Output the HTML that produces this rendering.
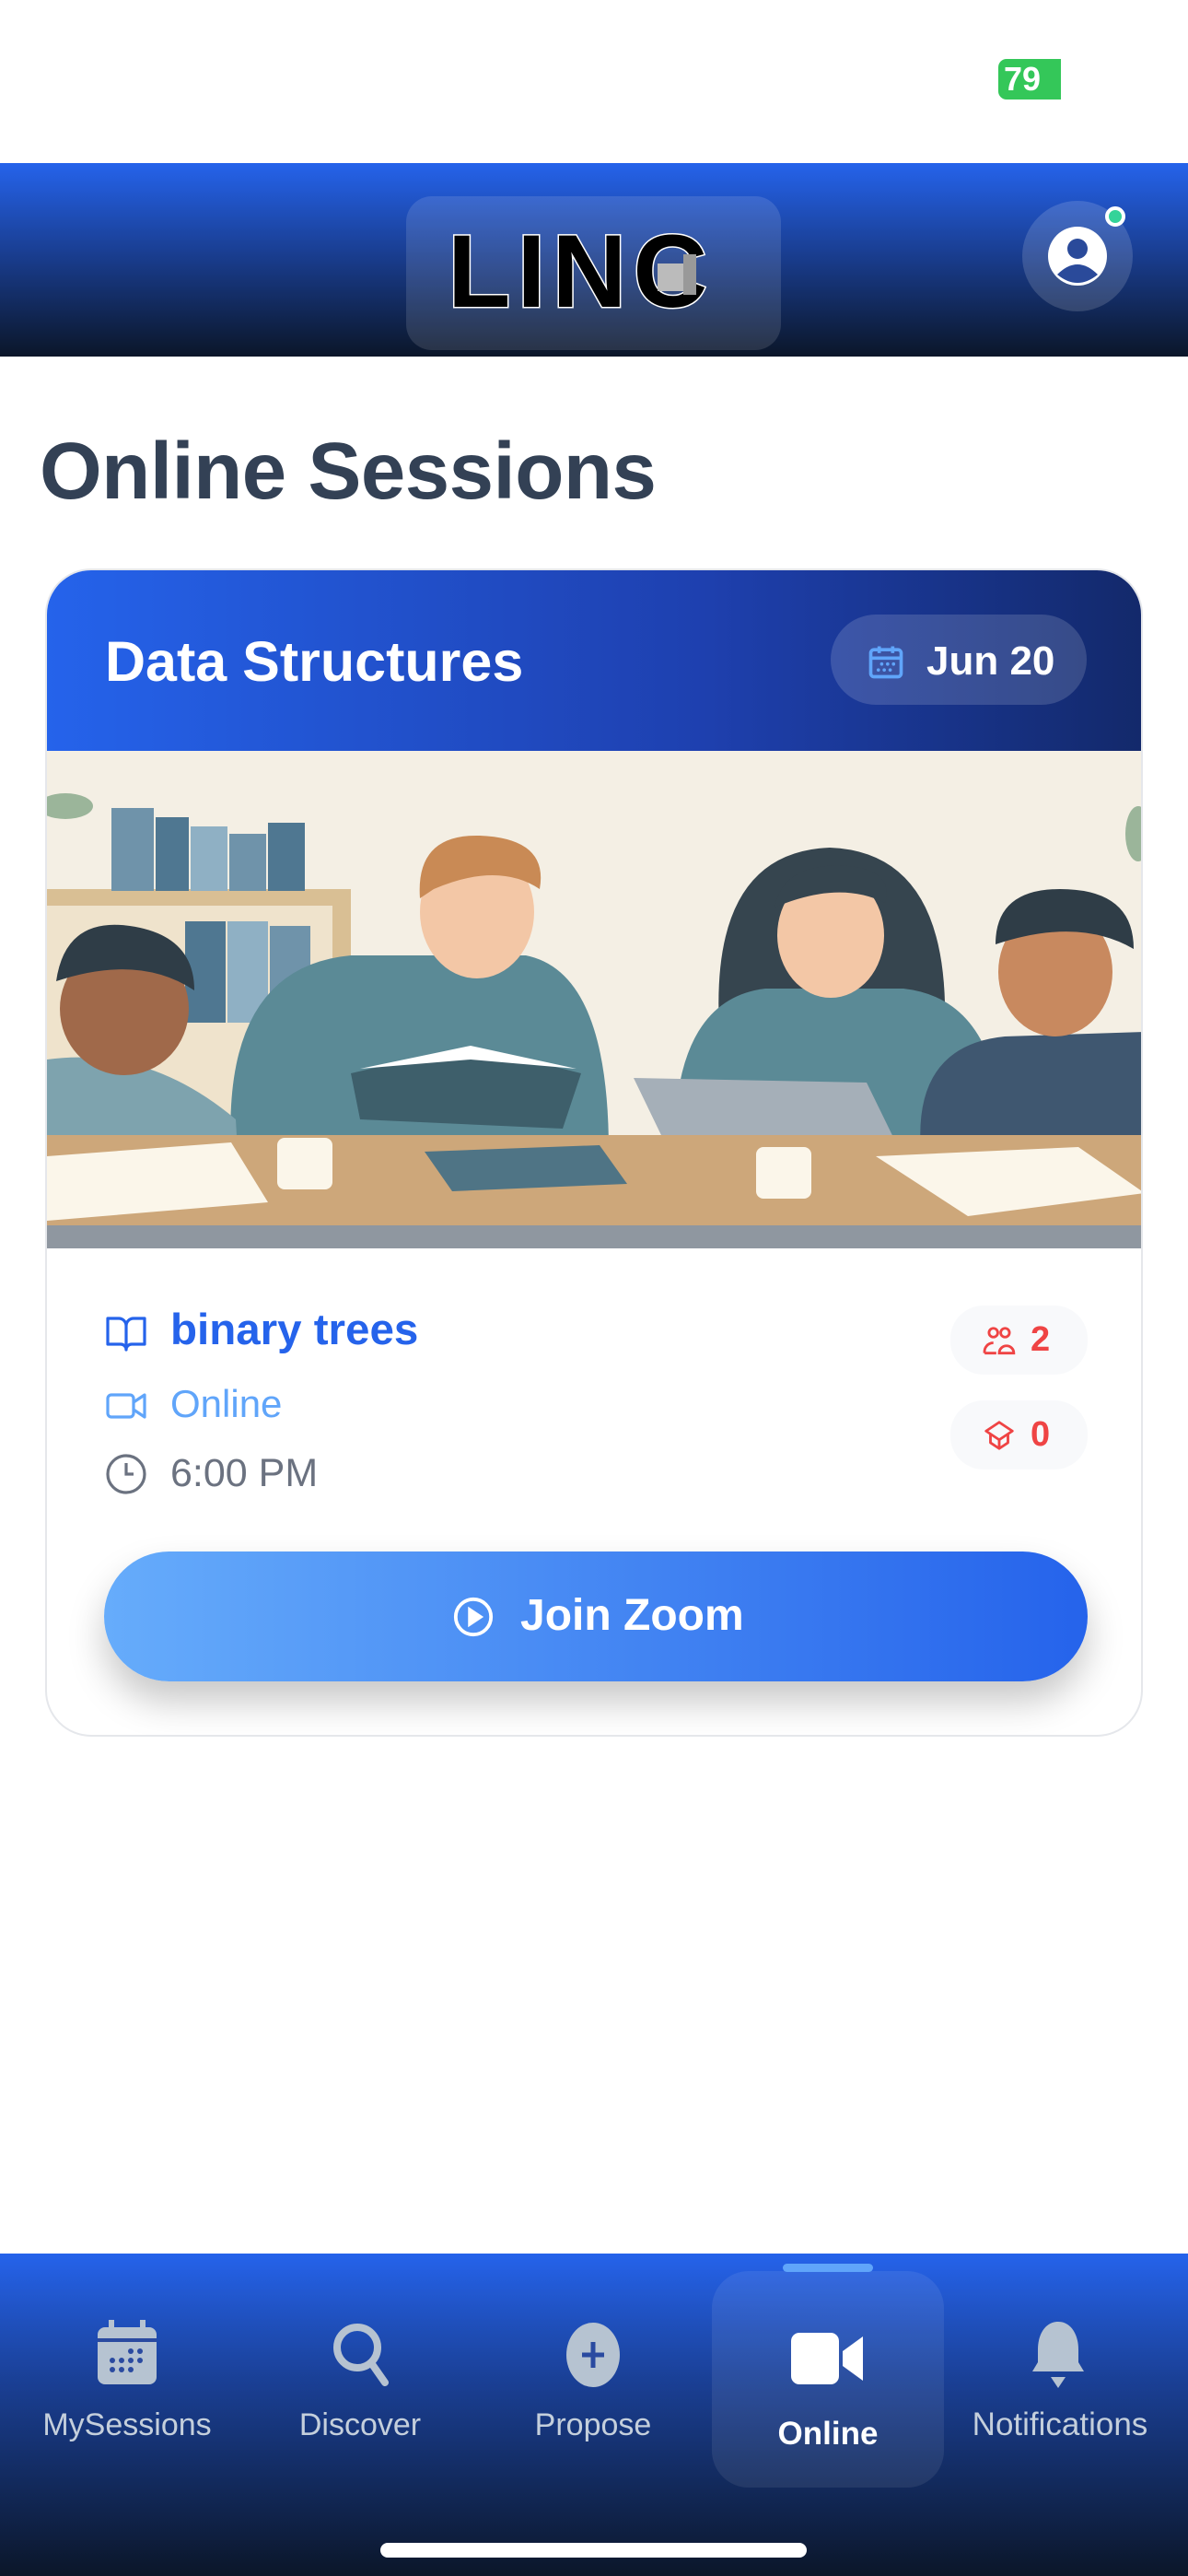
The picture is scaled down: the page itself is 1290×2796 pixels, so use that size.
<!DOCTYPE html>
<html><head><meta charset="utf-8">
<style>
*{margin:0;padding:0;box-sizing:border-box}
body{width:1290px;height:2796px;background:#fff;position:relative;overflow:hidden;font-family:"Liberation Sans",sans-serif}
.abs{position:absolute}
</style></head><body>
<div class="abs" style="left:1084px;top:64px;width:68px;height:44px;background:#34c759;border-radius:9px 0 0 9px;color:#fff;font-weight:bold;font-size:36px;line-height:44px;padding-left:6px;overflow:hidden">79</div>

<div class="abs" style="left:0;top:177px;width:1290px;height:210px;background:linear-gradient(#2563eb,#1a3f94 45%,#0b1629)"></div>
<div class="abs" style="left:441px;top:213px;width:407px;height:167px;border-radius:28px;background:rgba(255,255,255,0.12)"></div>
<div class="abs" style="left:486px;top:240px;font-size:112px;font-weight:bold;color:#000;line-height:110px;letter-spacing:7px;-webkit-text-stroke:3px #fff;paint-order:stroke fill">LINC</div>
<div class="abs" style="left:714px;top:286px;width:28px;height:30px;background:#bbb"></div>
<div class="abs" style="left:742px;top:276px;width:14px;height:44px;background:#999"></div>
<div class="abs" style="left:1110px;top:218px;width:120px;height:120px;border-radius:50%;background:rgba(255,255,255,0.15)"></div>
<svg class="abs" style="left:1128px;top:236px" width="84" height="84" viewBox="0 0 84 84"><circle cx="42" cy="42" r="32" fill="#fff"/><circle cx="42" cy="34" r="11" fill="#2a4a9a"/><path d="M20 62 Q42 40 64 62 Q42 80 20 62Z" fill="#2a4a9a"/></svg>
<div class="abs" style="left:1200px;top:224px;width:22px;height:22px;border-radius:50%;background:#34d399;border:4px solid #fff"></div>

<div class="abs" style="left:43px;top:462px;font-size:87px;font-weight:bold;color:#334155;line-height:100px;letter-spacing:-0.5px">Online Sessions</div>

<div class="abs" style="left:49px;top:617px;width:1192px;height:1268px;border-radius:50px;border:2px solid #e5e7eb;background:#fff;overflow:hidden">
 <div style="height:196px;background:linear-gradient(90deg,#2563eb,#1e40af 60%,#13296b);position:relative">
  <div class="abs" style="left:63px;top:64px;font-size:61px;font-weight:bold;color:#fff;line-height:70px">Data Structures</div>
  <div class="abs" style="left:851px;top:48px;width:278px;height:98px;border-radius:49px;background:rgba(255,255,255,0.15)"></div>
  <svg class="abs" style="left:889px;top:77px" width="44" height="44" viewBox="0 0 24 24" fill="none" stroke="#60a5fa" stroke-width="2"><rect x="3" y="5" width="18" height="16" rx="2"/><path d="M3 10h18M8 3v4M16 3v4"/><g fill="#60a5fa" stroke="none"><circle cx="13" cy="13.5" r="1"/><circle cx="16.5" cy="13.5" r="1"/><circle cx="7.5" cy="17" r="1"/><circle cx="11" cy="17" r="1"/><circle cx="14.5" cy="17" r="1"/><circle cx="9.5" cy="13.5" r="1"/></g></svg>
  <div class="abs" style="left:955px;top:72px;font-size:44px;font-weight:bold;color:#fff;line-height:54px">Jun 20</div>
 </div>
 <svg width="1192" height="540" viewBox="0 0 1192 540" style="display:block">
  <rect width="1192" height="540" fill="#f4efe4"/>
  <ellipse cx="20" cy="60" rx="30" ry="14" fill="#9bb59a"/>
  <ellipse cx="1185" cy="90" rx="14" ry="30" fill="#9bb59a"/>
  <rect x="0" y="150" width="330" height="300" fill="#d9bf94"/>
  <rect x="0" y="168" width="310" height="240" fill="#efe3cc"/>
  <rect x="70" y="62" width="46" height="90" fill="#6f93aa"/><rect x="118" y="72" width="36" height="80" fill="#4f7791"/><rect x="156" y="82" width="40" height="70" fill="#8fb0c4"/><rect x="198" y="90" width="40" height="62" fill="#6f93aa"/><rect x="240" y="78" width="40" height="74" fill="#4f7791"/>
  <rect x="150" y="185" width="44" height="110" fill="#4f7791"/><rect x="196" y="185" width="44" height="110" fill="#8fb0c4"/><rect x="242" y="190" width="44" height="105" fill="#6f93aa"/>
  <path d="M730 300 Q720 110 850 105 Q980 110 975 300Z" fill="#36454f"/>
  <path d="M681 435 Q680 270 780 258 L930 258 Q1038 270 1038 435Z" fill="#5b8a96"/>
  <ellipse cx="851" cy="200" rx="58" ry="68" fill="#f3c7a6"/>
  <path d="M790 170 Q800 120 870 125 Q920 130 910 165 Q860 140 790 170Z" fill="#36454f"/>
  <path d="M200 435 Q190 235 330 222 L520 222 Q610 240 610 435Z" fill="#5b8a96"/>
  <ellipse cx="467" cy="175" rx="62" ry="72" fill="#f3c7a6"/>
  <path d="M405 160 Q400 90 470 92 Q545 95 535 150 Q490 120 420 150Z" fill="#c98a55"/>
  <path d="M330 350 L460 320 L580 350 L560 410 L340 400Z" fill="#3e5f6b"/>
  <path d="M340 345 L460 320 L575 345 L460 335Z" fill="#fff"/>
  <path d="M949 435 Q940 320 1040 310 L1192 305 L1192 435Z" fill="#3f5770"/>
  <ellipse cx="1095" cy="240" rx="62" ry="70" fill="#c8895f"/>
  <path d="M1030 210 Q1030 150 1100 150 Q1180 150 1180 215 Q1120 180 1030 210Z" fill="#2f3d47"/>
  <path d="M0 471 L0 335 Q110 320 205 400 L209 471Z" fill="#7ea3ae"/>
  <ellipse cx="84" cy="280" rx="70" ry="72" fill="#a0694a"/>
  <path d="M10 250 Q20 180 90 190 Q160 200 160 260 Q100 220 10 250Z" fill="#2f3d47"/>
  <path d="M637 355 L890 360 L931 444 L680 444Z" fill="#a5afb8"/>
  <rect x="0" y="417" width="1192" height="110" fill="#cda77a"/>
  <rect x="0" y="515" width="1192" height="25" fill="#8f97a0"/>
  <path d="M0 440 L200 425 L240 490 L0 510Z" fill="#fbf6ea"/>
  <path d="M900 440 L1120 430 L1192 480 L1000 505Z" fill="#fbf6ea"/>
  <path d="M410 435 L600 428 L630 470 L440 478Z" fill="#4f7485"/>
  <rect x="250" y="420" width="60" height="56" rx="8" fill="#fbf6ea"/>
  <rect x="770" y="430" width="60" height="56" rx="8" fill="#fbf6ea"/>
 </svg>
 <svg class="abs" style="left:62px;top:804px" width="48" height="48" viewBox="0 0 24 24" fill="none" stroke="#2563eb" stroke-width="1.6" stroke-linejoin="round"><path d="M2 4h6a4 4 0 0 1 4 4v13a3 3 0 0 0-3-3H2zM22 4h-6a4 4 0 0 0-4 4v13a3 3 0 0 1 3-3h7z"/></svg>
 <div class="abs" style="left:134px;top:797px;font-size:47.5px;font-weight:bold;color:#2563eb;line-height:56px">binary trees</div>
 <svg class="abs" style="left:62px;top:883px" width="48" height="48" viewBox="0 0 24 24" fill="none" stroke="#60a5fa" stroke-width="1.6" stroke-linejoin="round"><rect x="2" y="6" width="14" height="12" rx="2"/><path d="M16 10l6-4v12l-6-4"/></svg>
 <div class="abs" style="left:134px;top:877px;font-size:42px;color:#60a5fa;line-height:56px">Online</div>
 <svg class="abs" style="left:62px;top:957px" width="48" height="48" viewBox="0 0 24 24" fill="none" stroke="#6b7280" stroke-width="1.6"><circle cx="12" cy="12" r="10"/><path d="M12 6v6h4"/></svg>
 <div class="abs" style="left:134px;top:952px;font-size:43px;color:#6b7280;line-height:56px">6:00 PM</div>
 <div class="abs" style="left:981px;top:798px;width:149px;height:75px;border-radius:36px;background:#f8f9fb"></div>
 <svg class="abs" style="left:1015px;top:818px" width="38" height="38" viewBox="0 0 24 24" fill="none" stroke="#ef4444" stroke-width="1.8"><circle cx="8" cy="6" r="3"/><circle cx="16" cy="6" r="3"/><path d="M2 20a6 6 0 0 1 6-7M12 20a5 5 0 0 1 10 0zM10 20H2"/></svg>
 <div class="abs" style="left:1068px;top:810px;font-size:38px;font-weight:bold;color:#ef4444;line-height:50px">2</div>
 <div class="abs" style="left:981px;top:901px;width:149px;height:75px;border-radius:36px;background:#f8f9fb"></div>
 <svg class="abs" style="left:1015px;top:920px" width="38" height="38" viewBox="0 0 24 24" fill="none" stroke="#ef4444" stroke-width="1.8" stroke-linejoin="round"><path d="M12 3l9 6-9 6-9-6z"/><path d="M6 11v6l6 4 6-4v-6M12 15v6"/></svg>
 <div class="abs" style="left:1068px;top:913px;font-size:38px;font-weight:bold;color:#ef4444;line-height:50px">0</div>
 <div class="abs" style="left:62px;top:1065px;width:1068px;height:141px;border-radius:71px;background:linear-gradient(90deg,#66acfb,#2563eb);box-shadow:0 22px 40px rgba(0,0,0,0.22)"></div>
 <svg class="abs" style="left:440px;top:1113px" width="46" height="46" viewBox="0 0 24 24" fill="none" stroke="#fff" stroke-width="2"><circle cx="12" cy="12" r="10"/><path d="M10 8l6 4-6 4z" fill="#fff"/></svg>
 <div class="abs" style="left:514px;top:1105px;font-size:48px;font-weight:bold;color:#fff;line-height:60px">Join Zoom</div>
</div>

<div class="abs" style="left:0;top:2446px;width:1290px;height:350px;background:linear-gradient(#2563eb,#1a3f94 40%,#0b1629)"></div>
<div class="abs" style="left:773px;top:2465px;width:252px;height:235px;border-radius:40px;background:rgba(255,255,255,0.08)"></div>
<div class="abs" style="left:850px;top:2457px;width:98px;height:9px;border-radius:5px;background:#60a5fa"></div>
<svg class="abs" style="left:106px;top:2518px" width="64" height="72" viewBox="0 0 64 72"><rect x="0" y="8" width="64" height="62" rx="8" fill="#b6c3d1"/><rect x="12" y="0" width="6" height="14" fill="#b6c3d1"/><rect x="46" y="0" width="6" height="14" fill="#b6c3d1"/><rect x="0" y="20" width="64" height="4" fill="#2a4aa0"/><g fill="#2a4aa0"><circle cx="36" cy="34" r="3"/><circle cx="46" cy="34" r="3"/><circle cx="16" cy="44" r="3"/><circle cx="26" cy="44" r="3"/><circle cx="36" cy="44" r="3"/><circle cx="46" cy="44" r="3"/><circle cx="16" cy="54" r="3"/><circle cx="26" cy="54" r="3"/><circle cx="36" cy="54" r="3"/></g></svg>
<svg class="abs" style="left:360px;top:2520px" width="64" height="70" viewBox="0 0 64 70" fill="none" stroke="#b6c3d1" stroke-width="8" stroke-linecap="round"><circle cx="28" cy="28" r="22"/><path d="M44 46l14 20"/></svg>
<svg class="abs" style="left:614px;top:2520px" width="60" height="72" viewBox="0 0 60 72"><ellipse cx="30" cy="36" rx="29" ry="35" fill="#b6c3d1"/><path d="M30 22v28M18 36h24" stroke="#2a4aa0" stroke-width="5"/></svg>
<svg class="abs" style="left:859px;top:2532px" width="80" height="56" viewBox="0 0 80 56"><rect x="0" y="0" width="52" height="56" rx="9" fill="#fff"/><path d="M56 20L78 4v48L56 36z" fill="#fff"/></svg>
<svg class="abs" style="left:1121px;top:2518px" width="56" height="76" viewBox="0 0 56 76"><path d="M28 2c-14 0-22 14-22 30v14l-6 10h56l-6-10V32C50 16 42 2 28 2z" fill="#b6c3d1"/><path d="M20 62h16l-8 12z" fill="#b6c3d1"/></svg>
<div class="abs" style="left:0;top:2610px;width:276px;text-align:center;font-size:34px;color:#c4cfdc;line-height:44px">MySessions</div>
<div class="abs" style="left:262px;top:2610px;width:258px;text-align:center;font-size:34px;color:#c4cfdc;line-height:44px">Discover</div>
<div class="abs" style="left:515px;top:2610px;width:258px;text-align:center;font-size:34px;color:#c4cfdc;line-height:44px">Propose</div>
<div class="abs" style="left:770px;top:2620px;width:258px;text-align:center;font-size:35px;font-weight:bold;color:#fff;line-height:44px">Online</div>
<div class="abs" style="left:1030px;top:2610px;width:242px;text-align:center;font-size:35px;color:#c4cfdc;line-height:44px">Notifications</div>
<div class="abs" style="left:413px;top:2760px;width:463px;height:16px;border-radius:8px;background:#fff"></div>
</body></html>
